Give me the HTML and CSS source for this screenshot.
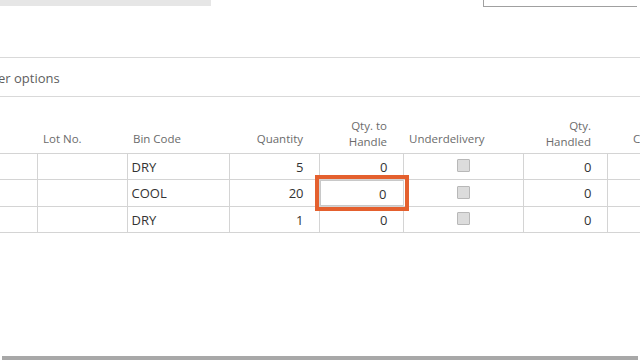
FILE: index.html
```html
<!DOCTYPE html>
<html>
<head>
<meta charset="utf-8">
<link rel="stylesheet" href="styles.css">
</head>
<body>
<div class="top">
  <div class="topbar"></div>
  <div class="topbox"></div>
</div>
<div class="options">er options</div>
<table class="grid">
  <colgroup>
    <col class="c0"><col class="c1"><col class="c2"><col class="c3"><col class="c4"><col class="c5"><col class="c6"><col class="c7">
  </colgroup>
  <thead>
    <tr>
      <th></th>
      <th class="l">Lot No.</th>
      <th class="l">Bin Code</th>
      <th class="r">Quantity</th>
      <th class="r two">Qty. to<br>Handle</th>
      <th class="l">Underdelivery</th>
      <th class="r two">Qty.<br>Handled</th>
      <th class="l cut">C</th>
    </tr>
  </thead>
  <tbody>
    <tr>
      <td></td><td></td><td>DRY</td><td class="r">5</td><td class="r">0</td>
      <td class="chk"><span class="box"></span></td><td class="r">0</td><td></td>
    </tr>
    <tr>
      <td></td><td></td><td>COOL</td><td class="r">20</td>
      <td class="r focus"><div class="input">0</div></td>
      <td class="chk"><span class="box"></span></td><td class="r">0</td><td></td>
    </tr>
    <tr>
      <td></td><td></td><td>DRY</td><td class="r">1</td><td class="r">0</td>
      <td class="chk"><span class="box"></span></td><td class="r">0</td><td></td>
    </tr>
  </tbody>
</table>
<div class="spacer"></div>
<div class="scroll"></div>
</body>
</html>
```
FILE: styles.css
```css
html, body {
  margin: 0;
  padding: 0;
  width: 640px;
  height: 360px;
  overflow: hidden;
  background: #fff;
  font-family: "Open Sans", "Liberation Sans", sans-serif;
  color: #333;
}
.top {
  display: flex;
  justify-content: space-between;
  height: 58px;
  border-bottom: 1px solid #d9d9d9;
  box-sizing: border-box;
}
.topbar {
  width: 211px;
  height: 6px;
  background: #e6e6e6;
}
.topbox {
  width: 153px;
  height: 6px;
  margin-right: 3px;
  border-left: 1px solid #a0a0a0;
  border-bottom: 1px solid #a0a0a0;
}
.options {
  height: 38px;
  line-height: 41px;
  font-size: 13px;
  color: #5e5e5e;
  margin-left: -2px;
  border-bottom: 1px solid #d9d9d9;
}
.grid {
  border-collapse: collapse;
  table-layout: fixed;
  width: 660px;
}
.c0 { width: 37px; }
.c1 { width: 90px; }
.c2 { width: 102px; }
.c3 { width: 90px; }
.c4 { width: 84px; }
.c5 { width: 120px; }
.c6 { width: 84px; }
.c7 { width: 53px; }
th {
  height: 50px;
  font-weight: normal;
  font-size: 11.5px;
  line-height: 16px;
  color: #6b6b6b;
  vertical-align: bottom;
  padding: 0 16px 6px 6px;
  white-space: nowrap;
  border-bottom: 1px solid #d4d4d4;
}
th.l { text-align: left; padding-left: 6px; }
th.r { text-align: right; }
th.two { padding-bottom: 3px; }
th.cut { padding-left: 26px; }
td {
  height: 25px;
  padding: 0 15px 0 4px;
  font-size: 13px;
  color: #333;
  border-bottom: 1px solid #d4d4d4;
  border-left: 1px solid #d4d4d4;
  white-space: nowrap;
}
td:first-child { border-left: none; }
td.r { text-align: right; }
td.chk { padding: 0 0 0 53px; }
.box {
  display: block;
  width: 11px;
  height: 11px;
  margin-top: -2px;
  background: #dcdcdc;
  border: 1px solid #b8b8b8;
  border-radius: 1px;
}
td.focus { padding: 0; }
.input {
  height: 26px;
  line-height: 26px;
  margin: 0 -1px 0 0;
  padding-right: 16px;
  border: 1px solid #c8c8c8;
  box-sizing: border-box;
  outline: 4px solid #e4602e;
  outline-offset: 1px;
}
.spacer { height: 123px; }
.scroll {
  height: 4px;
  margin: 0 2px;
  background: #a8a8a8;
}
```
